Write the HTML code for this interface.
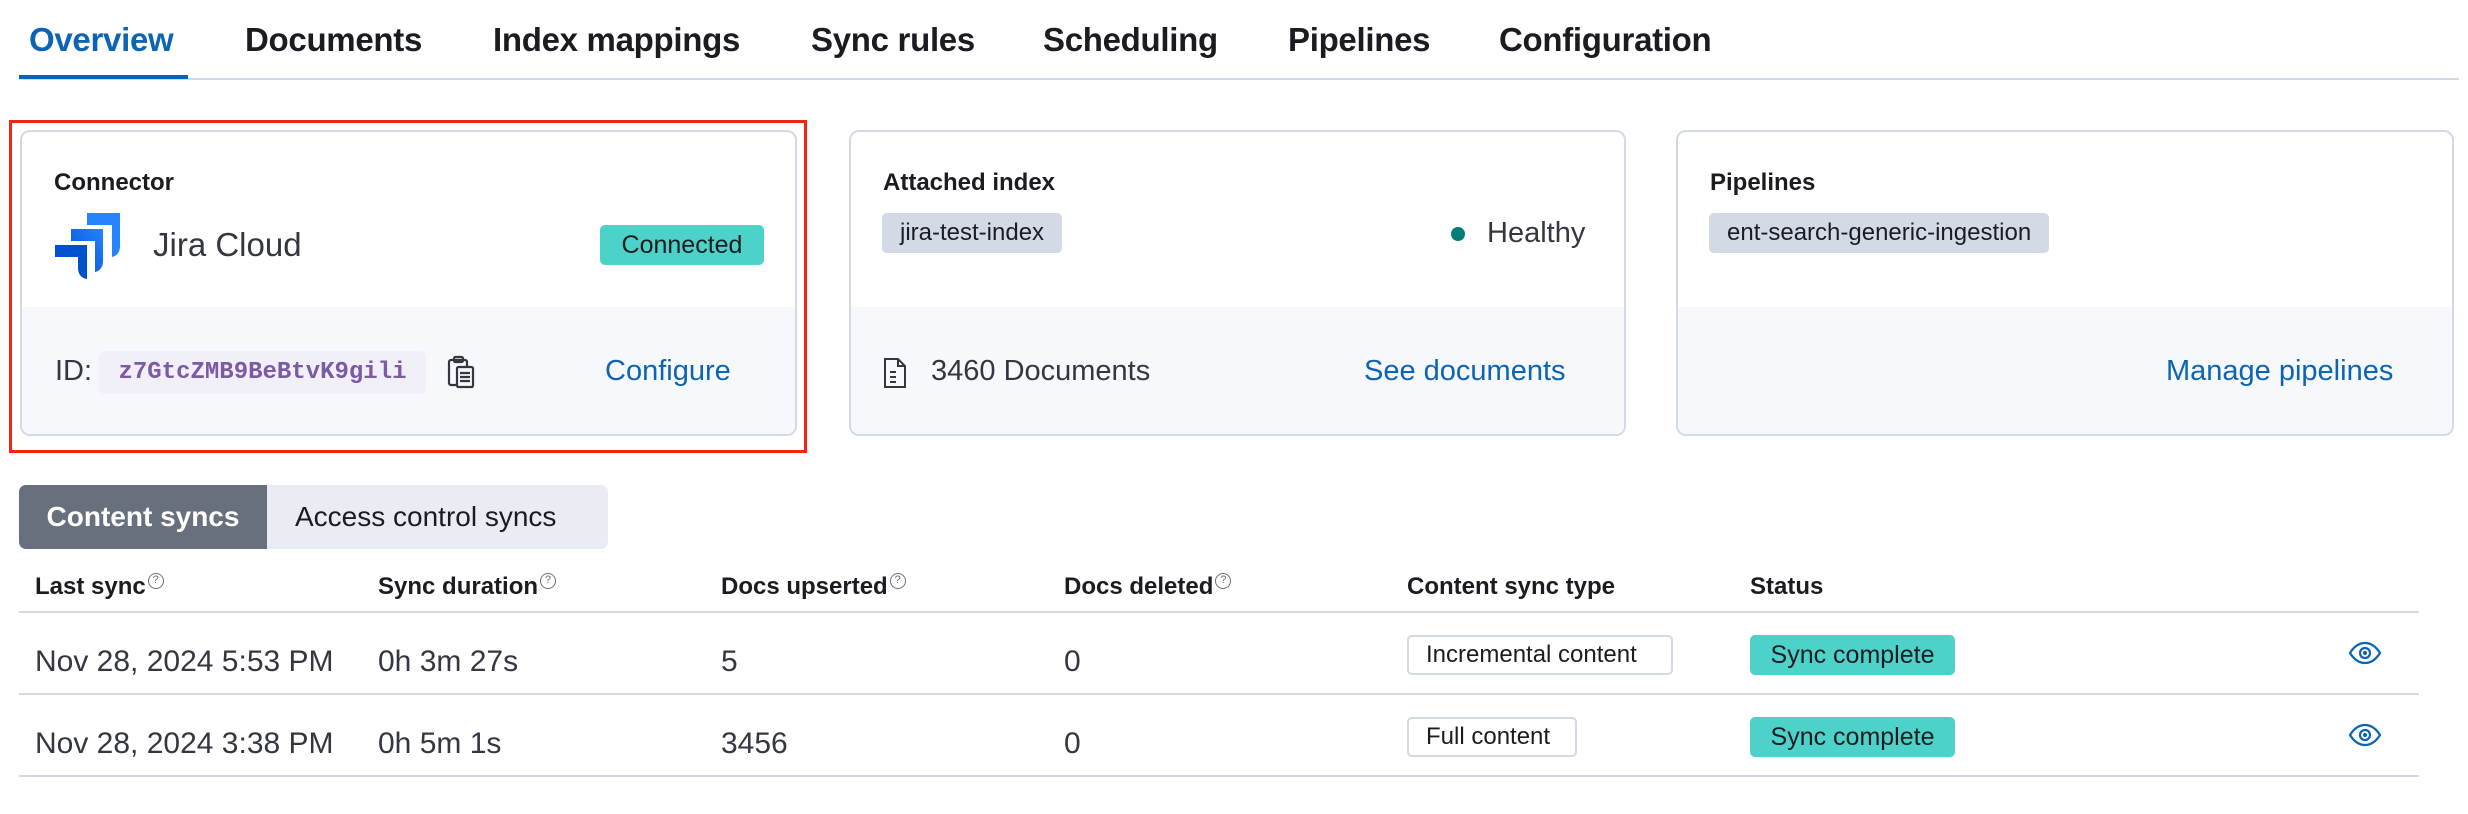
<!DOCTYPE html>
<html><head><meta charset="utf-8"><style>
*{box-sizing:border-box;margin:0;padding:0}
body{width:2468px;height:814px;background:#fff;font-family:"Liberation Sans",Arial,sans-serif;color:#343741;position:relative;overflow:hidden}
.abs{position:absolute;white-space:nowrap}
.tab{position:absolute;top:21px;font-size:33px;font-weight:bold;color:#1a1c21;letter-spacing:-0.3px}
.card{position:absolute;top:130px;height:306px;border:2px solid #d3dae6;border-radius:10px;overflow:hidden;background:#fff}
.foot{position:absolute;left:0;right:0;top:175px;bottom:0;background:#f7f8fc}
.lbl{position:absolute;left:32px;top:37px;font-size:24px;font-weight:bold;color:#1a1c21}
.link{color:#0b64b4;font-size:29px}
.badge{position:absolute;background:#d3dae6;border-radius:5px;font-size:24px;color:#1a1c21;height:40px;line-height:40px;padding:0 18px}
.th{position:absolute;top:573px;font-size:24px;font-weight:bold;color:#1a1c21}
.q{display:inline-block;width:16px;height:16px;border:1.5px solid #69707d;border-radius:50%;font-size:11px;line-height:13px;text-align:center;color:#69707d;vertical-align:top;margin-left:2px;font-weight:normal}
.td{position:absolute;font-size:30px;color:#343741}
.hl{position:absolute;left:19px;width:2400px;height:2px;background:#d3dae6}
.outline{position:absolute;height:40px;line-height:36px;border:2px solid #d3dae6;border-radius:5px;font-size:24px;color:#1a1c21;padding:0 17px;background:#fff}
.sync{position:absolute;left:1750px;width:205px;height:40px;line-height:40px;background:#4dd2ca;border-radius:5px;font-size:25px;color:#1a1c21;text-align:center}
</style></head><body>
<div class="tab" style="left:29px;color:#0b64b4">Overview</div>
<div class="tab" style="left:245px">Documents</div>
<div class="tab" style="left:493px">Index mappings</div>
<div class="tab" style="left:811px">Sync rules</div>
<div class="tab" style="left:1043px">Scheduling</div>
<div class="tab" style="left:1288px">Pipelines</div>
<div class="tab" style="left:1499px">Configuration</div>
<div class="abs" style="left:19px;top:78px;width:2440px;height:2px;background:#d3dae6"></div>
<div class="abs" style="left:19px;top:75px;width:169px;height:4px;background:#0b64b4"></div>

<div class="abs" style="left:9px;top:120px;width:798px;height:333px;border:3px solid #f0260e"></div>
<div class="card" style="left:20px;width:777px">
  <div class="foot"></div>
  <div class="lbl">Connector</div>
  <svg class="abs" style="left:33px;top:81px" width="66" height="66" viewBox="0 0 66 66">
    <defs><linearGradient id="g1" x1="1" y1="0" x2="0" y2="1"><stop offset="0" stop-color="#2684ff"/><stop offset="1" stop-color="#0052cc"/></linearGradient></defs>
    <path d="M32 0h33v33c0 6-3 10-8 11V12H32z" fill="#2684ff"/>
    <path d="M16 16h32v32c0 6-3 10-8 11V28H16z" fill="url(#g1)"/>
    <path d="M0 32h32v34c-6-1-9-5-9-11V44H0z" fill="#0052cc"/>
  </svg>
  <div class="abs" style="left:131px;top:94px;font-size:33px;color:#343741">Jira Cloud</div>
  <div class="abs" style="left:578px;top:93px;width:164px;height:40px;line-height:40px;background:#4dd2ca;border-radius:5px;font-size:25px;color:#1a1c21;text-align:center">Connected</div>
  <div class="abs" style="left:33px;top:223px;font-size:29px;color:#343741">ID:</div>
  <div class="abs" style="left:77px;top:219px;width:327px;height:43px;line-height:43px;background:#f1f0f8;border-radius:6px;font-family:'Liberation Mono',monospace;font-weight:bold;font-size:24px;color:#7b5aa6;text-align:center">z7GtcZMB9BeBtvK9gili</div>
  <svg class="abs" style="left:425px;top:223px" width="28" height="34" viewBox="0 0 28 34" fill="none" stroke="#343741" stroke-width="2.2"><rect x="2" y="5" width="18" height="25" rx="2"/><rect x="7" y="2" width="9" height="5" rx="1.5"/><rect x="10" y="12" width="16" height="20" rx="1.5" fill="#f7f8fc"/><path d="M13 18h10M13 22h10M13 26h10"/></svg>
  <div class="abs link" style="left:583px;top:223px">Configure</div>
</div>

<div class="card" style="left:849px;width:777px">
  <div class="foot"></div>
  <div class="lbl">Attached index</div>
  <div class="badge" style="left:31px;top:81px">jira-test-index</div>
  <div class="abs" style="left:600px;top:95px;width:14px;height:14px;border-radius:50%;background:#017d73"></div>
  <div class="abs" style="left:636px;top:85px;font-size:29px">Healthy</div>
  <svg class="abs" style="left:32px;top:225px" width="24" height="32" viewBox="0 0 24 32" fill="none" stroke="#343741" stroke-width="2"><path d="M2 2h13l7 7v21H2z M15 2v7h7 M7 15h6M7 20h6M7 25h6"/></svg>
  <div class="abs" style="left:80px;top:223px;font-size:29px">3460 Documents</div>
  <div class="abs link" style="left:513px;top:223px">See documents</div>
</div>

<div class="card" style="left:1676px;width:778px">
  <div class="foot"></div>
  <div class="lbl">Pipelines</div>
  <div class="badge" style="left:31px;top:81px">ent-search-generic-ingestion</div>
  <div class="abs link" style="left:488px;top:223px">Manage pipelines</div>
</div>

<div class="abs" style="left:19px;top:485px;width:589px;height:64px;background:#e9edf3;border-radius:7px;overflow:hidden">
  <div class="abs" style="left:0;top:0;width:248px;height:64px;background:#69707d;color:#fff;font-weight:bold;font-size:28px;line-height:64px;text-align:center">Content syncs</div>
  <div class="abs" style="left:276px;top:0;font-size:28px;line-height:64px;color:#1a1c21">Access control syncs</div>
</div>

<div class="th" style="left:35px">Last sync<span class="q">?</span></div>
<div class="th" style="left:378px">Sync duration<span class="q">?</span></div>
<div class="th" style="left:721px">Docs upserted<span class="q">?</span></div>
<div class="th" style="left:1064px">Docs deleted<span class="q">?</span></div>
<div class="th" style="left:1407px">Content sync type</div>
<div class="th" style="left:1750px">Status</div>
<div class="hl" style="top:611px"></div>
<div class="hl" style="top:693px"></div>
<div class="hl" style="top:775px"></div>

<div class="td" style="left:35px;top:645px">Nov 28, 2024 5:53 PM</div>
<div class="td" style="left:378px;top:645px">0h 3m 27s</div>
<div class="td" style="left:721px;top:645px">5</div>
<div class="td" style="left:1064px;top:645px">0</div>
<div class="outline" style="left:1407px;top:635px;width:266px">Incremental content</div>
<div class="sync" style="top:635px">Sync complete</div>

<div class="td" style="left:35px;top:727px">Nov 28, 2024 3:38 PM</div>
<div class="td" style="left:378px;top:727px">0h 5m 1s</div>
<div class="td" style="left:721px;top:727px">3456</div>
<div class="td" style="left:1064px;top:727px">0</div>
<div class="outline" style="left:1407px;top:717px;width:170px">Full content</div>
<div class="sync" style="top:717px">Sync complete</div>

<svg class="abs" style="left:2348px;top:641px" width="34" height="24" viewBox="0 0 34 24" fill="none" stroke="#0b64b4" stroke-width="2.2"><path d="M2 12C7 4 12 2 17 2s10 2 15 10c-5 8-10 10-15 10S7 20 2 12z"/><circle cx="17" cy="12" r="5"/><circle cx="17" cy="12" r="1" fill="#0b64b4"/></svg>
<svg class="abs" style="left:2348px;top:723px" width="34" height="24" viewBox="0 0 34 24" fill="none" stroke="#0b64b4" stroke-width="2.2"><path d="M2 12C7 4 12 2 17 2s10 2 15 10c-5 8-10 10-15 10S7 20 2 12z"/><circle cx="17" cy="12" r="5"/><circle cx="17" cy="12" r="1" fill="#0b64b4"/></svg>
</body></html>
